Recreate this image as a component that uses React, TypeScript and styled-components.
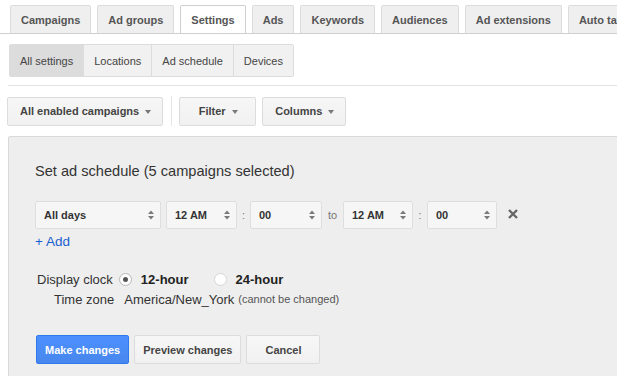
import styled, { createGlobalStyle } from 'styled-components';

const GlobalStyle = createGlobalStyle`
    body{
        margin: 0;
        background-color: #fff;
        font-family: "Liberation Sans", Arial, sans-serif;
    }
`

const Page = styled.div`
    width: 617px;
    height: 376px;
    overflow: hidden;
    color: #444;
`

const TabBar = styled.div`
    display: flex;
    align-items: flex-end;
    gap: 6px;
    height: 33px;
    padding-left: 10px;
    border-bottom: 1px solid #cfcfcf;
    white-space: nowrap;
    overflow: hidden;
`

const Tab = styled.div<{ $active?: boolean }>`
    flex-shrink: 0;
    box-sizing: border-box;
    height: ${p => p.$active ? '29px' : '28px'};
    margin-bottom: ${p => p.$active ? '-1px' : '0'};
    padding: 0 10px;
    display: flex;
    align-items: center;
    font-size: 11px;
    font-weight: bold;
    color: #555;
    background-color: ${p => p.$active ? '#fff' : '#efefef'};
    border: 1px solid ${p => p.$active ? '#cfcfcf' : '#dcdcdc'};
    border-bottom: none;
    border-radius: 2px 2px 0 0;
`

const SubTabs = styled.div`
    display: inline-flex;
    margin: 10px 0 0 9px;
    border: 1px solid #dcdcdc;
    border-radius: 2px;
`

const SubTab = styled.div<{ $active?: boolean }>`
    height: 31px;
    padding: 0 10px;
    display: flex;
    align-items: center;
    font-size: 11px;
    color: #444;
    background-color: ${p => p.$active ? '#dcdcdc' : '#f1f1f1'};
    & + &{
        border-left: 1px solid #dcdcdc;
    }
`

const Divider = styled.div`
    margin: 8px 0 0 8px;
    border-top: 1px solid #e3e3e3;
`

const Toolbar = styled.div`
    display: flex;
    align-items: center;
    padding: 10px 0 0 7px;
`

const MenuButton = styled.div<{ $minWidth?: number }>`
    box-sizing: border-box;
    height: 29px;
    min-width: ${p => p.$minWidth ? p.$minWidth + 'px' : 'auto'};
    padding: 0 11px 0 12px;
    display: flex;
    align-items: center;
    justify-content: center;
    gap: 6px;
    font-size: 11px;
    font-weight: bold;
    color: #444;
    background: linear-gradient(#f6f6f6, #f1f1f1);
    border: 1px solid #dcdcdc;
    border-radius: 2px;
    & + &{
        margin-left: 6px;
    }
`

const Caret = styled.span`
    width: 0;
    height: 0;
    border-left: 3.5px solid transparent;
    border-right: 3.5px solid transparent;
    border-top: 4px solid #777;
    margin-top: 1px;
`

const ToolbarSeparator = styled.div`
    width: 1px;
    height: 30px;
    background-color: #e6e6e6;
    margin: 0 7px 0 8px;
`

const Panel = styled.div`
    margin: 10px -20px 0 8px;
    padding: 24px 0 40px 26px;
    background-color: #eee;
    border: 1px solid #d9d9d9;
    border-radius: 2px;
`

const Title = styled.div`
    font-size: 14.6px;
    line-height: 20px;
    color: #333;
`

const ScheduleRow = styled.div`
    display: flex;
    align-items: center;
    margin-top: 20px;
`

const Select = styled.div<{ $width: number }>`
    box-sizing: border-box;
    width: ${p => p.$width}px;
    height: 28px;
    padding: 0 6px 0 8px;
    display: flex;
    align-items: center;
    justify-content: space-between;
    font-size: 11px;
    font-weight: bold;
    color: #333;
    background-color: #f6f6f6;
    border: 1px solid #dedede;
    border-radius: 2px;
`

const Joiner = styled.span<{ $width: number }>`
    width: ${p => p.$width}px;
    text-align: center;
    font-size: 11px;
    color: #777;
`

const RemoveIcon = styled.svg`
    margin-left: 11px;
    margin-top: -2px;
`

const AddLink = styled.a`
    display: block;
    margin-top: 4px;
    font-size: 13.5px;
    line-height: 17px;
    color: #1a5fd0;
    text-decoration: none;
`

const Options = styled.div`
    margin-top: 19px;
`

const OptionRow = styled.div<{ $indent: number }>`
    display: flex;
    align-items: center;
    height: 20px;
    padding-left: ${p => p.$indent}px;
    font-size: 13px;
    color: #333;
`

const Radio = styled.span<{ $checked?: boolean }>`
    box-sizing: border-box;
    width: 13px;
    height: 13px;
    margin: 0 9px 0 6px;
    border-radius: 50%;
    background-color: #fff;
    border: 1px solid ${p => p.$checked ? '#b8b8b8' : '#d6d6d6'};
    display: flex;
    align-items: center;
    justify-content: center;
    &::after{
        content: '';
        display: ${p => p.$checked ? 'block' : 'none'};
        width: 5px;
        height: 5px;
        border-radius: 50%;
        background-color: #555;
    }
`

const RadioLabel = styled.span`
    font-weight: bold;
    color: #222;
    & + ${Radio}{
        margin-left: 25px;
    }
`

const Value = styled.span`
    margin-left: 10px;
`

const Note = styled.span`
    margin-left: 4px;
    font-size: 11px;
    color: #555;
`

const Actions = styled.div`
    display: flex;
    gap: 5px;
    margin-top: 26px;
    margin-left: 1px;
`

const ActionButton = styled.div<{ $primary?: boolean; $minWidth?: number }>`
    box-sizing: border-box;
    height: 29px;
    min-width: ${p => p.$minWidth ? p.$minWidth + 'px' : 'auto'};
    padding: 0 8px;
    display: flex;
    align-items: center;
    justify-content: center;
    font-size: 11px;
    font-weight: bold;
    color: ${p => p.$primary ? '#fff' : '#444'};
    background: ${p => p.$primary ? 'linear-gradient(#4d90fe, #4787ed)' : 'linear-gradient(#f7f7f7, #f1f1f1)'};
    border: 1px solid ${p => p.$primary ? '#3079ed' : '#dcdcdc'};
    border-radius: 2px;
`

const SpinArrows = () => (
    <svg width="6" height="10" viewBox="0 0 6 10">
        <path d="M0 4 L3 0.5 L6 4 Z" fill="#7a7a7a"/>
        <path d="M0 6 L3 9.5 L6 6 Z" fill="#7a7a7a"/>
    </svg>
);

const DropSelect = ({ label, width }: { label: string; width: number }) => (
    <Select $width={width}>
        <span>{label}</span>
        <SpinArrows/>
    </Select>
);

const tabs = ['Campaigns', 'Ad groups', 'Settings', 'Ads', 'Keywords', 'Audiences', 'Ad extensions', 'Auto targets'];
const subTabs = ['All settings', 'Locations', 'Ad schedule', 'Devices'];

const App = () => {
    return (
        <Page>
            <GlobalStyle/>
            <TabBar>
                {tabs.map(t => <Tab key={t} $active={t === 'Settings'}>{t}</Tab>)}
            </TabBar>
            <SubTabs>
                {subTabs.map(t => <SubTab key={t} $active={t === 'All settings'}>{t}</SubTab>)}
            </SubTabs>
            <Divider/>
            <Toolbar>
                <MenuButton>All enabled campaigns<Caret/></MenuButton>
                <ToolbarSeparator/>
                <MenuButton $minWidth={77}>Filter<Caret/></MenuButton>
                <MenuButton>Columns<Caret/></MenuButton>
            </Toolbar>
            <Panel>
                <Title>Set ad schedule (5 campaigns selected)</Title>
                <ScheduleRow>
                    <DropSelect label='All days' width={126}/>
                    <Joiner $width={5}/>
                    <DropSelect label='12 AM' width={71}/>
                    <Joiner $width={13}>:</Joiner>
                    <DropSelect label='00' width={72}/>
                    <Joiner $width={21}>to</Joiner>
                    <DropSelect label='12 AM' width={70}/>
                    <Joiner $width={14}>:</Joiner>
                    <DropSelect label='00' width={70}/>
                    <RemoveIcon width="10" height="10" viewBox="0 0 10 10">
                        <path d="M1 1 L9 9 M9 1 L1 9" stroke="#666" strokeWidth="2.4"/>
                    </RemoveIcon>
                </ScheduleRow>
                <AddLink href="#">+ Add</AddLink>
                <Options>
                    <OptionRow $indent={2}>
                        Display clock
                        <Radio $checked/>
                        <RadioLabel>12-hour</RadioLabel>
                        <Radio/>
                        <RadioLabel>24-hour</RadioLabel>
                    </OptionRow>
                    <OptionRow $indent={19}>
                        Time zone
                        <Value>America/New_York</Value>
                        <Note>(cannot be changed)</Note>
                    </OptionRow>
                </Options>
                <Actions>
                    <ActionButton $primary>Make changes</ActionButton>
                    <ActionButton>Preview changes</ActionButton>
                    <ActionButton $minWidth={74}>Cancel</ActionButton>
                </Actions>
            </Panel>
        </Page>
    );
}

export default App;
